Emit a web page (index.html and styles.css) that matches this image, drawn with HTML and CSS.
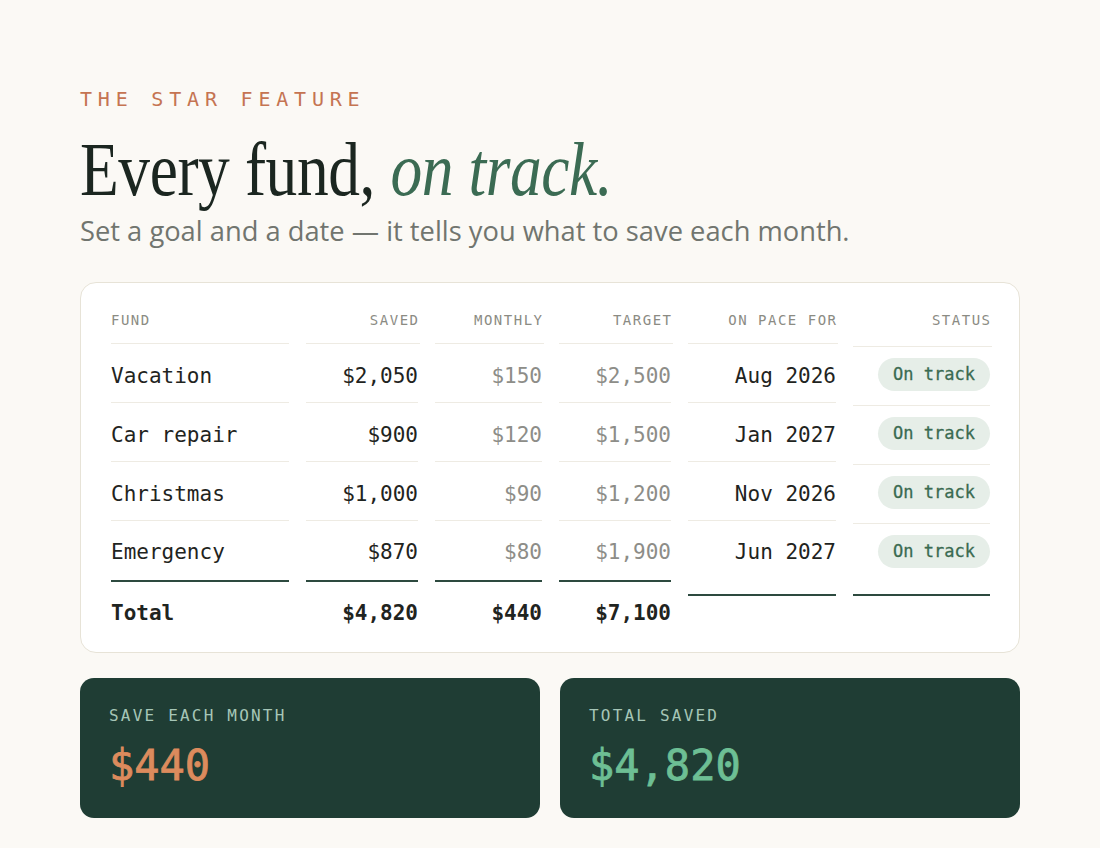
FILE: index.html
```html
<!DOCTYPE html>
<html lang="en">
<head>
<meta charset="utf-8">
<title>Every fund, on track.</title>
<link rel="stylesheet" href="styles.css">
</head>
<body>
<main class="page">
  <p class="eyebrow">THE STAR FEATURE</p>
  <h1 class="title"><span class="title-inner">Every fund, <em class="accent">on track.</em></span></h1>
  <p class="lede">Set a goal and a date — it tells you what to save each month.</p>

  <section class="table-card">
    <div class="grid">
      <div class="col col-fund">
        <div class="cell head">FUND</div>
        <div class="cell">Vacation</div>
        <div class="cell">Car repair</div>
        <div class="cell">Christmas</div>
        <div class="cell last">Emergency</div>
        <div class="cell total">Total</div>
      </div>
      <div class="col num">
        <div class="cell head">SAVED</div>
        <div class="cell">$2,050</div>
        <div class="cell">$900</div>
        <div class="cell">$1,000</div>
        <div class="cell last">$870</div>
        <div class="cell total">$4,820</div>
      </div>
      <div class="col num muted">
        <div class="cell head">MONTHLY</div>
        <div class="cell">$150</div>
        <div class="cell">$120</div>
        <div class="cell">$90</div>
        <div class="cell last">$80</div>
        <div class="cell total">$440</div>
      </div>
      <div class="col num muted">
        <div class="cell head">TARGET</div>
        <div class="cell">$2,500</div>
        <div class="cell">$1,500</div>
        <div class="cell">$1,200</div>
        <div class="cell last">$1,900</div>
        <div class="cell total">$7,100</div>
      </div>
      <div class="col num col-pace">
        <div class="cell head">ON PACE FOR</div>
        <div class="cell">Aug 2026</div>
        <div class="cell">Jan 2027</div>
        <div class="cell">Nov 2026</div>
        <div class="cell last">Jun 2027</div>
      </div>
      <div class="col num col-status">
        <div class="cell head">STATUS</div>
        <div class="cell"><span class="pill">On track</span></div>
        <div class="cell"><span class="pill">On track</span></div>
        <div class="cell"><span class="pill">On track</span></div>
        <div class="cell last"><span class="pill">On track</span></div>
      </div>
    </div>
  </section>

  <section class="stats">
    <div class="stat">
      <p class="stat-label">SAVE EACH MONTH</p>
      <p class="stat-value orange">$440</p>
    </div>
    <div class="stat">
      <p class="stat-label">TOTAL SAVED</p>
      <p class="stat-value green">$4,820</p>
    </div>
  </section>
</main>
</body>
</html>
```

FILE: styles.css
```css
* { box-sizing: border-box; }

html, body {
  margin: 0;
  padding: 0;
  background: #fbf9f5;
}

body {
  font-family: "DejaVu Sans Mono", "Liberation Mono", monospace;
  color: #1f2421;
}

.page {
  padding: 86px 80px 0 80px;
  width: 1100px;
}

.eyebrow {
  margin: 0;
  font-family: "DejaVu Sans Mono", monospace;
  font-size: 20px;
  line-height: 26px;
  letter-spacing: 5.8px;
  color: #c57452;
}

.title {
  margin: 14px 0 0 0;
  font-family: "Liberation Serif", "Times New Roman", serif;
  font-weight: 400;
  font-size: 76px;
  line-height: 86px;
  color: #1b2620;
  white-space: nowrap;
}

.title-inner {
  display: inline-block;
  transform: scaleX(0.835);
  transform-origin: left center;
  letter-spacing: -0.5px;
}

.accent {
  font-style: italic;
  color: #3b6b53;
}

.lede {
  margin: 2px 0 0 0;
  font-family: "Open Sans", "Liberation Sans", Arial, sans-serif;
  font-size: 27.3px;
  line-height: 34px;
  color: #71756f;
  white-space: nowrap;
}

.table-card {
  margin-top: 34px;
  width: 940px;
  background: #ffffff;
  border: 1px solid #e7e3d7;
  border-radius: 16px;
  padding: 27px 29px 0 30px;
  height: 371px;
}

.grid {
  display: grid;
  grid-template-columns: 178px 112px 107px 112px 148px 137px;
  column-gap: 17px;
  align-items: start;
}

.col {
  display: flex;
  flex-direction: column;
}

.cell {
  font-size: 21px;
  line-height: 30px;
  padding: 17px 0 11px 0;
  border-bottom: 1px solid #eeebe3;
  white-space: nowrap;
}

.num .cell { text-align: right; }
.muted .cell { color: #8d8d88; }

.col .cell.head {
  font-size: 14px;
  line-height: 20px;
  letter-spacing: 1.5px;
  padding: 0 0 13px 0;
  color: #8b8b83;
}

.num .cell.head { margin-right: -1.5px; }

.cell.last {
  padding: 16px 0 13px 0;
  border-bottom: 2px solid #2d4a3f;
}

.cell.total {
  font-weight: 700;
  color: #1f2421;
  border-bottom: none;
  padding: 16px 0 0 0;
}

.col-pace .cell.last { padding-bottom: 27px; }

.col-status .cell { padding: 11px 0 14px 0; line-height: 33px; }
.col-status .cell.head { padding: 0 0 16px 0; line-height: 20px; }
.col-status .cell.last { padding: 11px 0 26px 0; }

.pill {
  display: inline-block;
  height: 33px;
  line-height: 33px;
  padding: 0 15px;
  border-radius: 17px;
  background: #e6eee8;
  color: #3a6a50;
  font-size: 17px;
  vertical-align: top;
  -webkit-text-stroke: 0.3px #3a6a50;
}

.stats {
  margin-top: 25px;
  display: grid;
  grid-template-columns: 460px 460px;
  column-gap: 20px;
}

.stat {
  height: 140px;
  background: #1f3d34;
  border-radius: 14px;
  padding: 27px 29px;
}

.stat-label {
  margin: 0;
  font-size: 16px;
  line-height: 22px;
  letter-spacing: 2.2px;
  color: #a6c6b7;
}

.stat-value {
  margin: 13px 0 0 0;
  font-size: 42px;
  line-height: 52px;
  font-weight: 400;
}

.orange { color: #dc8b5d; -webkit-text-stroke: 0.8px #dc8b5d; }
.green { color: #6dbf94; -webkit-text-stroke: 0.8px #6dbf94; }
```
